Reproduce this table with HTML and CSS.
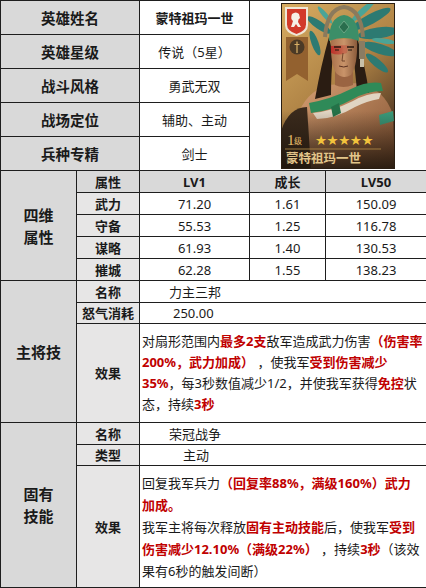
FILE: index.html
```html
<!DOCTYPE html>
<html lang="zh">
<head>
<meta charset="utf-8">
<title>蒙特祖玛一世</title>
<link rel="stylesheet" href="styles.css">
</head>
<body>
<table class="sheet">
<colgroup><col class="c1"><col class="c2"><col class="c3"><col class="c4"><col class="c5"></colgroup>
<tr class="r-top">
  <td colspan="2" class="lab">英雄姓名</td>
  <td class="val bold">蒙特祖玛一世</td>
  <td colspan="2" rowspan="5" class="pic">
    <svg class="portrait" width="114" height="166" viewBox="0 0 114 166">
      <defs>
        <linearGradient id="bg" x1="0" y1="0" x2="0.6" y2="1">
          <stop offset="0" stop-color="#d8ad62"/>
          <stop offset="0.55" stop-color="#b08446"/>
          <stop offset="1" stop-color="#4a3220"/>
        </linearGradient>
        <linearGradient id="shade" x1="0" y1="0" x2="0" y2="1">
          <stop offset="0" stop-color="#1c140c" stop-opacity="0"/>
          <stop offset="1" stop-color="#1c140c" stop-opacity="0.85"/>
        </linearGradient>
        <linearGradient id="skin" x1="0" y1="0" x2="1" y2="1">
          <stop offset="0" stop-color="#d7a074"/>
          <stop offset="1" stop-color="#7e4e2e"/>
        </linearGradient>
        <linearGradient id="face" x1="0" y1="0" x2="1" y2="0">
          <stop offset="0" stop-color="#a8704a"/>
          <stop offset="0.5" stop-color="#c9946a"/>
          <stop offset="1" stop-color="#8a5a3a"/>
        </linearGradient>
        <linearGradient id="paint" x1="0" y1="0" x2="1" y2="0">
          <stop offset="0" stop-color="#c0302a" stop-opacity="0.95"/>
          <stop offset="1" stop-color="#c0302a" stop-opacity="0.2"/>
        </linearGradient>
      </defs>
      <rect x="0" y="0" width="114" height="166" fill="url(#bg)"/>
      <!-- feathers -->
      <g fill="#2d7a72">
        <ellipse cx="90" cy="16" rx="22" ry="5" transform="rotate(-28 90 16)"/>
        <ellipse cx="97" cy="30" rx="20" ry="5.5" transform="rotate(-8 97 30)"/>
        <ellipse cx="99" cy="46" rx="18" ry="5" transform="rotate(18 99 46)"/>
        <ellipse cx="96" cy="60" rx="14" ry="4" transform="rotate(40 96 60)"/>
        <ellipse cx="38" cy="22" rx="14" ry="4" transform="rotate(35 38 22)"/>
        <ellipse cx="34" cy="40" rx="13" ry="3.5" transform="rotate(70 34 40)"/>
      </g>
      <g fill="#4ba497">
        <ellipse cx="82" cy="8" rx="16" ry="3" transform="rotate(-42 82 8)"/>
        <ellipse cx="103" cy="38" rx="12" ry="2.5" transform="rotate(8 103 38)"/>
        <ellipse cx="44" cy="12" rx="11" ry="2.5" transform="rotate(50 44 12)"/>
      </g>
      <!-- body -->
      <path d="M14 166 L16 114 Q24 90 46 82 L78 80 Q104 86 112 112 L114 166 Z" fill="url(#skin)"/>
      <path d="M0 128 Q8 104 26 104 L30 166 L0 166 Z" fill="#3a2a1c"/>
      <!-- hair -->
      <path d="M48 34 Q40 62 34 96 L50 92 Q50 70 52 52 Z" fill="#2a1c12"/>
      <path d="M76 34 Q84 62 88 90 L76 88 Q74 66 72 52 Z" fill="#2a1c12"/>
      <!-- neck -->
      <path d="M54 66 L54 82 Q62 86 72 82 L72 64 Z" fill="#9a6442"/>
      <!-- face -->
      <path d="M50 36 Q49 60 55 70 Q62 77 70 72 Q77 62 76 36 Z" fill="url(#face)"/>
      <path d="M50 43 L68 42 L66 50 Q57 53 50 50 Z" fill="url(#paint)"/>
      <path d="M53 44 h7 M66 44 h7" stroke="#2a1a10" stroke-width="1.3"/>
      <path d="M54 47 h4 M67 47 h4" stroke="#1e120a" stroke-width="1"/>
      <path d="M62 50 L61 58 L64 58" stroke="#6a3e26" stroke-width="0.9" fill="none"/>
      <path d="M58 63 q5 2 9 0" stroke="#5a3020" stroke-width="1" fill="none"/>
      <!-- headdress -->
      <path d="M44 34 Q46 6 63 4 Q80 6 82 34" fill="none" stroke="#8b7a5c" stroke-width="4"/>
      <path d="M48 38 Q48 14 63 12 Q78 14 78 38 Q63 32 48 38 Z" fill="#3c8e68"/>
      <path d="M63 18 L68 24 L63 30 L58 24 Z" fill="#2a6e4e" stroke="#8fc0a0" stroke-width="0.6"/>
      <rect x="78" y="38" width="6" height="18" fill="#8a7c62"/>
      <rect x="79" y="56" width="4" height="8" fill="#c8c0a8"/>
      <!-- green collar -->
      <path d="M28 100 Q50 96 70 86 Q86 78 100 80 L102 88 Q86 88 72 96 Q50 108 30 110 Z" fill="#2f8a58"/>
      <path d="M32 110 Q52 108 72 98 Q86 90 100 90 L98 96 Q86 98 74 104 Q54 116 36 116 Z" fill="#e9e4d6" opacity="0.85"/>
      <path d="M50 104 L58 100 L60 110 L52 114 Z" fill="#247248"/>
      <!-- arm band -->
      <path d="M98 112 L112 108 L113 118 L99 122 Z" fill="#3a9a7a"/>
      <!-- bottom shade -->
      <rect x="0" y="108" width="114" height="58" fill="url(#shade)"/>
      <!-- shield -->
      <path d="M4 4 H27 V22 Q27 30 15.5 33 Q4 30 4 22 Z" fill="#efe6d6"/>
      <path d="M6 6 H25 V21.5 Q25 28 15.5 31 Q6 28 6 21.5 Z" fill="#d23a2a"/>
      <path d="M11 11 q4 -3 7 0 l1 4 q-2 1 -2 4 l3 5 h-3 l-2 -3 l-2 3 h-3 l2 -6 q-3 -2 -1 -7 Z" fill="#f6f0e6"/>
      <!-- ribbon -->
      <path d="M5 34 H27 V78 L16 71 L5 78 Z" fill="#93612f"/>
      <circle cx="16" cy="44" r="7.5" fill="#4b3a26"/>
      <path d="M16 38.5 V50 M13.5 41.5 H18.5" stroke="#d9b066" stroke-width="1.2"/>
      <!-- level and stars -->
      <text x="6" y="142" class="lvl-n">1</text>
      <text x="13" y="141" class="lvl-t">级</text>
      <text x="34" y="141.5" class="stars">★★★★★</text>
      <line x1="4" y1="146" x2="100" y2="146" stroke="#b8904a" stroke-width="0.8"/>
      <text x="5" y="160" class="pname">蒙特祖玛一世</text>
      <rect x="0.5" y="0.5" width="113" height="165" fill="none" stroke="#2a1e12"/>
    </svg>
  </td>
</tr>
<tr class="r-top"><td colspan="2" class="lab">英雄星级</td><td class="val">传说（5星）</td></tr>
<tr class="r-top"><td colspan="2" class="lab">战斗风格</td><td class="val">勇武无双</td></tr>
<tr class="r-top"><td colspan="2" class="lab">战场定位</td><td class="val">辅助、主动</td></tr>
<tr class="r-top"><td colspan="2" class="lab">兵种专精</td><td class="val">剑士</td></tr>

<tr class="r-stat">
  <td rowspan="5" class="lab big">四维<br>属性</td>
  <td class="hd">属性</td><td class="hd">LV1</td><td class="hd">成长</td><td class="hd">LV50</td>
</tr>
<tr class="r-stat"><td class="sub">武力</td><td class="num">71.20</td><td class="num">1.61</td><td class="num">150.09</td></tr>
<tr class="r-stat"><td class="sub">守备</td><td class="num">55.53</td><td class="num">1.25</td><td class="num">116.78</td></tr>
<tr class="r-stat"><td class="sub">谋略</td><td class="num">61.93</td><td class="num">1.40</td><td class="num">130.53</td></tr>
<tr class="r-stat"><td class="sub">摧城</td><td class="num">62.28</td><td class="num">1.55</td><td class="num">138.23</td></tr>

<tr class="r-a">
  <td rowspan="3" class="lab big">主将技</td>
  <td class="sub">名称</td><td colspan="3" class="txt ind1">力主三邦</td>
</tr>
<tr class="r-b"><td class="sub">怒气消耗</td><td colspan="3" class="txt ind2">250.00</td></tr>
<tr class="r-eff1">
  <td class="sub">效果</td>
  <td colspan="3" class="eff eff1">对扇形范围内<b>最多2支</b>敌军造成武力伤害<b>（伤害率</b><br><b>200%，武力加成）</b> ，使我军<b>受到伤害减少</b><br><b>35%</b>，每3秒数值减少1/2，并使我军获得<b>免控</b>状<br>态，持续<b>3秒</b></td>
</tr>

<tr class="r-a">
  <td rowspan="3" class="lab big">固有<br>技能</td>
  <td class="sub">名称</td><td colspan="3" class="txt ind1">荣冠战争</td>
</tr>
<tr class="r-b"><td class="sub">类型</td><td colspan="3" class="txt ind3">主动</td></tr>
<tr class="r-eff2">
  <td class="sub">效果</td>
  <td colspan="3" class="eff eff2">回复我军兵力<b>（回复率88%，满级160%）武力</b><br><b>加成。</b><br>我军主将每次释放<b>固有主动技能</b>后，使我军<b>受到</b><br><b>伤害减少12.10%（满级22%）</b> ，持续<b>3秒</b>（该效<br>果有6秒的触发间断）</td>
</tr>
</table>
</body>
</html>
```
FILE: styles.css
```css
html, body {
  margin: 0;
  padding: 0;
  background: #ffffff;
}
body {
  font-family: "Noto Sans", "Noto Sans CJK SC", sans-serif;
  color: #1a1a1a;
}
.sheet {
  border-collapse: collapse;
  table-layout: fixed;
  width: 426px;
}
.c1 { width: 76px; }
.c2 { width: 63px; }
.c3 { width: 110px; }
.c4 { width: 76px; }
.c5 { width: 101px; }
.sheet td {
  border: 1px solid #1e1e1e;
  padding: 0;
  text-align: center;
  vertical-align: middle;
  font-size: 13px;
  line-height: 18px;
  overflow: hidden;
}
.r-top { height: 34px; }
.r-stat { height: 22px; }
.r-a { height: 22px; }
.r-b { height: 21px; }
.r-eff1 { height: 99px; }
.r-eff2 { height: 122px; }

.sheet td.lab {
  background: #d9d9d9;
  font-weight: 700;
  font-size: 14.5px;
}
.sheet td.big {
  font-size: 15px;
  line-height: 22px;
}
.sheet td.hd {
  background: #d9d9d9;
  font-weight: 700;
}
.sheet td.sub {
  background: #e7e6e6;
  font-weight: 700;
}
.bold { font-weight: 700; }
.sheet td.txt { text-align: left; }
.sheet td.ind1 { padding-left: 29px; }
.sheet td.ind2 { padding-left: 33px; }
.sheet td.ind3 { padding-left: 43px; }
.sheet td.eff {
  text-align: left;
  padding-left: 2px;
  white-space: nowrap;
}
.sheet td.eff1 { line-height: 21px; }
.sheet td.eff2 { line-height: 22px; }
.eff b {
  color: #c00000;
  font-weight: 700;
}
.pic {
  background: #ffffff;
}
.portrait {
  display: block;
  margin: 0 auto;
}
.lvl-n {
  font-family: "Liberation Serif", serif;
  font-size: 15px;
  fill: #e6be6a;
}
.lvl-t {
  font-family: "Noto Sans CJK SC", sans-serif;
  font-size: 8px;
  fill: #e6be6a;
}
.stars {
  font-family: "DejaVu Sans", sans-serif;
  font-size: 13.5px;
  fill: #f2c33c;
  letter-spacing: -0.5px;
}
.pname {
  font-family: "Noto Sans CJK SC", sans-serif;
  font-size: 12.5px;
  font-weight: 700;
  fill: #e2c58a;
}
```
